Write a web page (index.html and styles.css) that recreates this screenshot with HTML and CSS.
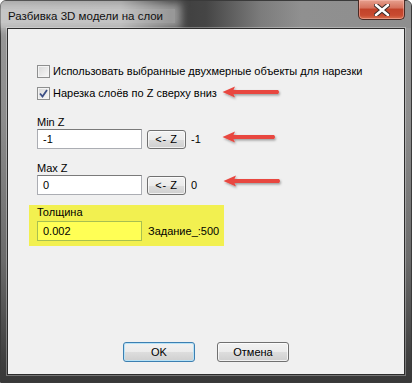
FILE: index.html
```html
<!DOCTYPE html>
<html lang="ru">
<head>
    <meta charset="UTF-8">
    <meta name="viewport" content="width=device-width, initial-scale=1.0">
    <title>Разбивка 3D модели на слои</title>
    <link rel="stylesheet" href="styles.css">
</head>
<body>

    <div class="window">
        <div class="titlebar">
            <span class="title">Разбивка 3D модели на слои</span>
            <button class="close" title="Закрыть">
                <svg width="16" height="12" viewBox="0 0 16 12">
                    <path d="M2 1 L14 11 M14 1 L2 11" stroke="#3a2a28" stroke-width="4.6" stroke-linecap="round"/>
                    <path d="M2 1 L14 11 M14 1 L2 11" stroke="#ffffff" stroke-width="2.6" stroke-linecap="round"/>
                </svg>
            </button>
        </div>

        <div class="client">
            <label class="check">
                <span class="box"></span>
                Использовать выбранные двухмерные объекты для нарезки
            </label>
            <label class="check">
                <span class="box">
                    <svg width="9" height="9" viewBox="0 0 9 9">
                        <path d="M1 4.5 L3.5 7.5 L8 1" fill="none" stroke="#3c4f86" stroke-width="1.8"/>
                    </svg>
                </span>
                Нарезка слоёв по Z сверху вниз
            </label>

            <div class="field field-min">
                <div class="field-label">Min Z</div>
                <div class="field-row">
                    <div class="textbox">-1</div>
                    <button class="btn btn-small">&lt;- Z</button>
                    <span class="value">-1</span>
                </div>
            </div>

            <div class="field field-max">
                <div class="field-label">Max Z</div>
                <div class="field-row">
                    <div class="textbox">0</div>
                    <button class="btn btn-small">&lt;- Z</button>
                    <span class="value">0</span>
                </div>
            </div>

            <div class="highlight">
                <div class="field-label">Толщина</div>
                <div class="field-row">
                    <div class="textbox textbox-yellow">0.002</div>
                    <span class="task">Задание_:500</span>
                </div>
            </div>

            <div class="actions">
                <button class="btn btn-default">OK</button>
                <button class="btn">Отмена</button>
            </div>

            <!-- red annotation arrows -->
            <svg class="arrow arrow-1" width="64" height="16" viewBox="0 0 64 16"><use href="#arrow"/></svg>
            <svg class="arrow arrow-2" width="64" height="16" viewBox="0 0 64 16"><use href="#arrow-short"/></svg>
            <svg class="arrow arrow-3" width="64" height="16" viewBox="0 0 64 16"><use href="#arrow"/></svg>
        </div>
    </div>

    <svg width="0" height="0" class="defs">
        <defs>
            <filter id="shadow" x="-20%" y="-50%" width="140%" height="200%">
                <feDropShadow dx="1" dy="1.5" stdDeviation="1.2" flood-color="#000" flood-opacity="0.35"/>
            </filter>
            <g id="arrow" filter="url(#shadow)">
                <path d="M0.5 7 L13 1.5 L11.5 5 L56 5 Q58 7 56 9 L11.5 9 L13 12.5 Z" fill="#e8473f"/>
            </g>
            <g id="arrow-short" filter="url(#shadow)">
                <path d="M0.5 7 L13 1.5 L11.5 5 L52 5 Q54 7 52 9 L11.5 9 L13 12.5 Z" fill="#e8473f"/>
            </g>
        </defs>
    </svg>

</body>
</html>
```

FILE: styles.css
```css
body {
    margin: 0;
    font-family: "Liberation Sans", Arial, sans-serif;
    font-size: 11px;
    color: #000;
    background: #fff;
}
.defs {
    position: absolute;
}
.window {
    width: 412px;
    height: 383px;
    box-sizing: border-box;
    border: 1px solid #3a3a3a;
    border-radius: 6px 6px 0 0;
    padding: 0 6px 7px 6px;
    display: flex;
    flex-direction: column;
    background: linear-gradient(180deg, #9a9a9a 0, #8c8c8c 120px, #6a6a6a 260px, #3e3e3e 360px, #383838 100%);
}
.titlebar {
    height: 27px;
    margin: 0 -6px;
    padding: 0 6px 0 7px;
    display: flex;
    justify-content: space-between;
    align-items: flex-start;
    border-radius: 5px 5px 0 0;
    background: linear-gradient(90deg, #a2a2a2 0, #9c9c9c 120px, #3e3e3e 170px, #454545 205px, #7c7c7c 260px, #909090 300px, #8e8e8e 100%);
}
.title {
    margin-top: 8px;
    margin-left: -7px;
    padding: 0 12px 0 7px;
    font-size: 11.5px;
    line-height: 14px;
    color: #101010;
    box-shadow: 0 0 8px 6px rgba(225, 225, 225, 0.55);
    background: rgba(225, 225, 225, 0.55);
}
.close {
    width: 47px;
    height: 20px;
    margin-top: -1px;
    padding: 0;
    border: 1px solid #4a2a24;
    border-top: none;
    border-radius: 0 0 5px 5px;
    display: flex;
    align-items: center;
    justify-content: center;
    background: linear-gradient(180deg, #e6a08e 0, #d6735e 40%, #c2432a 50%, #c84a30 80%, #d8704e 100%);
    box-shadow: inset 0 0 0 1px rgba(255, 200, 190, 0.45);
}
.client {
    position: relative;
    flex: 1;
    border: 1px solid #2c2c2c;
    box-shadow: 0 0 0 1px rgba(255, 255, 255, 0.3);
    background: #f0f0f0;
    padding: 34px 0 12px 29px;
    display: flex;
    flex-direction: column;
    align-items: flex-start;
}
.check {
    height: 16px;
    display: flex;
    align-items: center;
    gap: 3px;
    margin-bottom: 6px;
    line-height: 16px;
}
.box {
    width: 11px;
    height: 11px;
    border: 1px solid #8e8f8f;
    box-shadow: inset 0 0 0 1px #f4f4f4;
    background: linear-gradient(135deg, #d8d8d8 0, #f2f2f2 80%);
    display: flex;
    align-items: center;
    justify-content: center;
}
.field {
    display: flex;
    flex-direction: column;
}
.field-min {
    margin-top: 8px;
}
.field-max {
    margin-top: 12px;
}
.field-label {
    height: 14px;
    line-height: 14px;
}
.field-row {
    display: flex;
    align-items: center;
    height: 20px;
}
.textbox {
    width: 105px;
    height: 20px;
    box-sizing: border-box;
    border: 1px solid #abadb3;
    border-top-color: #7a7a7a;
    background: #fff;
    padding-left: 5px;
    line-height: 18px;
}
.textbox-yellow {
    background: #ffff55;
    border-color: #a8c050;
}
.btn {
    font-family: "Liberation Sans", Arial, sans-serif;
    font-size: 11px;
    color: #000;
    height: 20px;
    padding: 0;
    border: 1px solid #707070;
    border-radius: 3px;
    background: linear-gradient(180deg, #f2f2f2 0, #ebebeb 50%, #dddddd 51%, #cfcfcf 100%);
    box-shadow: inset 0 0 0 1px rgba(255, 255, 255, 0.7);
}
.btn-small {
    width: 39px;
    height: 19px;
    margin-left: 5px;
    letter-spacing: 0.6px;
}
.value {
    margin-left: 5px;
}
.highlight {
    margin: 10px 0 0 -8px;
    width: 195px;
    height: 41px;
    box-sizing: border-box;
    padding: 0 0 0 8px;
    background: #f2f050;
    display: flex;
    flex-direction: column;
    gap: 2px;
}
.task {
    margin-left: 6px;
}
.actions {
    margin-top: auto;
    align-self: stretch;
    margin-left: -29px;
    display: flex;
    justify-content: center;
    gap: 22px;
}
.actions .btn {
    width: 72px;
}
.btn-default {
    border-color: #3c7fb1;
    box-shadow: inset 0 0 0 1px #b8e2f6;
}
.arrow {
    position: absolute;
    left: 214px;
}
.arrow-1 {
    top: 56px;
}
.arrow-2 {
    top: 101px;
}
.arrow-3 {
    top: 145px;
    left: 215px;
}
```
